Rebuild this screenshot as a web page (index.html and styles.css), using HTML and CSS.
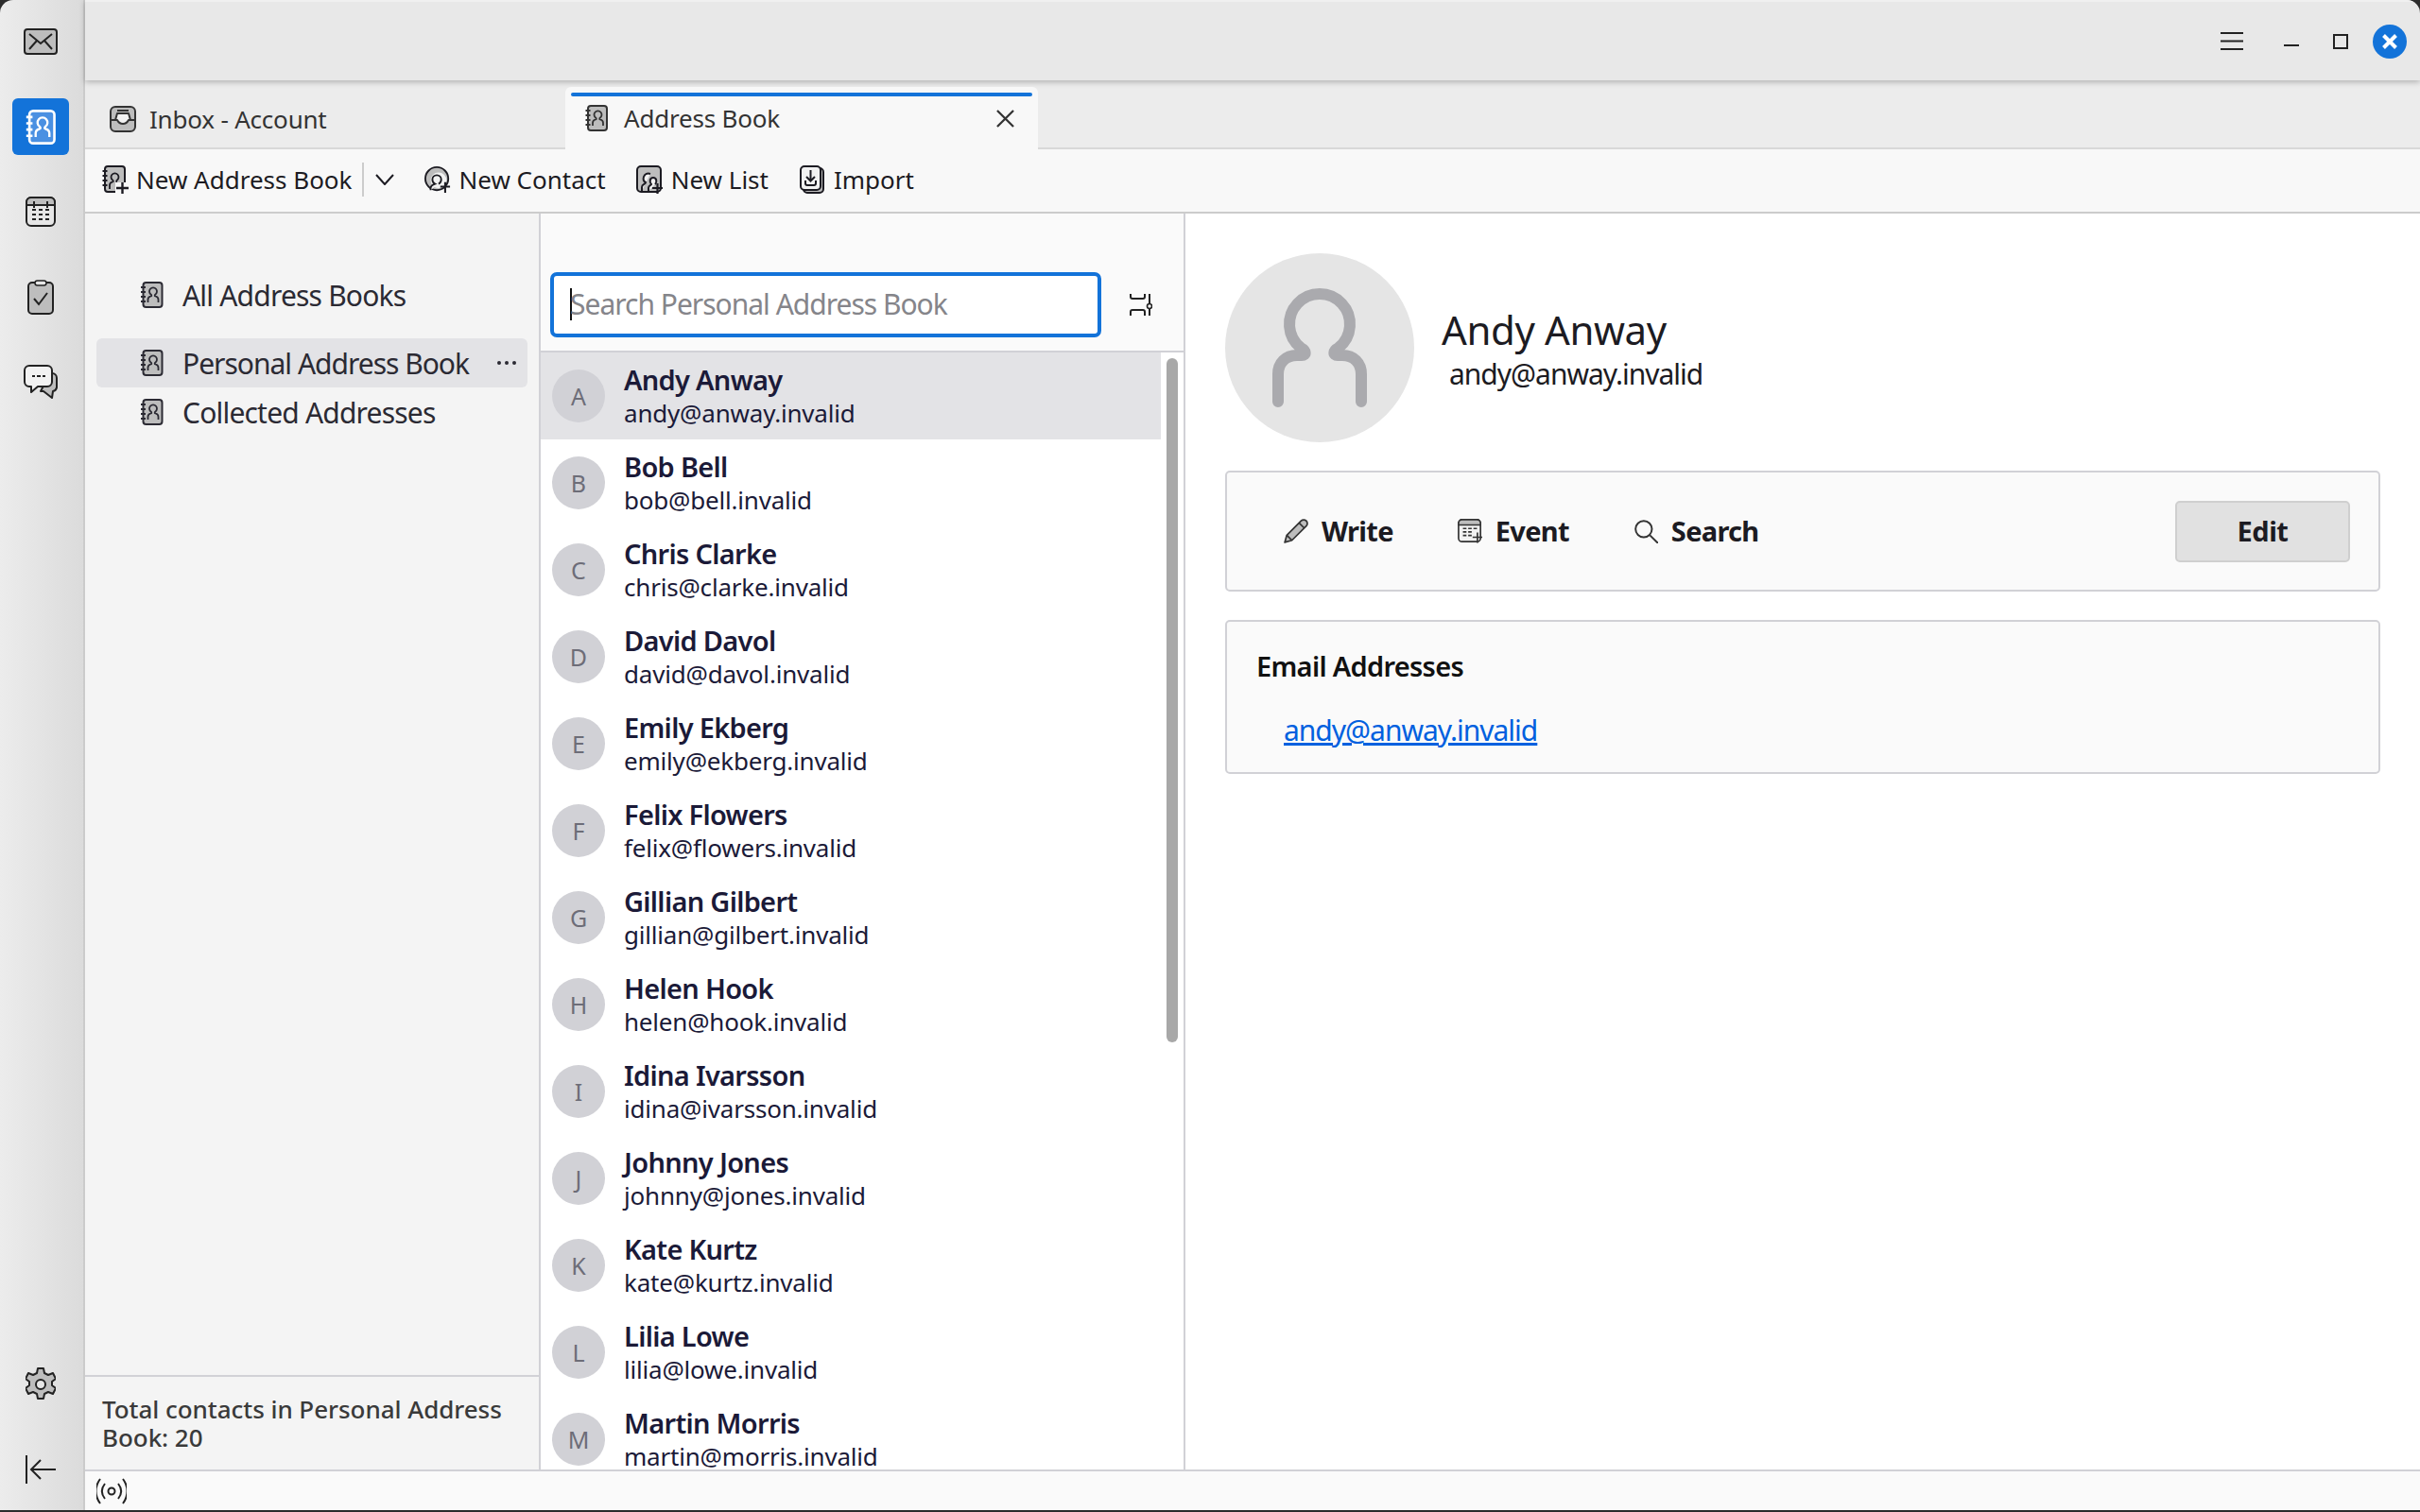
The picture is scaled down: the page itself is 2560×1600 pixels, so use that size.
FILE: index.html
```html
<!DOCTYPE html>
<html lang="en">

<head>
    <meta charset="UTF-8" />
    <title>Address Book</title>
    <link rel="stylesheet" href="styles.css">
</head>

<body>
    <svg class="defs" width="0" height="0">
        <symbol id="abook" viewBox="0 0 24 28">
            <rect class="ic-body" x="3" y="1" width="20" height="26" rx="3" stroke="currentColor" stroke-width="2" />
            <path d="M0.5 6h5M0.5 11h5M0.5 16h5M0.5 21h5" stroke="currentColor" stroke-width="2" fill="none" />
            <path d="M8 22v-3c0-2 1-3 3-3.500c1-.3 1-1 .3-1.800a4 4 0 1 1 4.400 0c-.7.800-.7 1.500.3 1.800c2 .5 3 1.500 3 3.500v3" stroke="currentColor" stroke-width="1.800" fill="none" />
        </symbol>
        <symbol id="abook-new" viewBox="0 0 28 30">
            <rect x="3" y="1" width="21" height="27" rx="3" fill="#bdbdbd" stroke="currentColor" stroke-width="2" />
            <path d="M0.500 6h5M0.500 11h5M0.500 16h5M0.500 21h5" stroke="currentColor" stroke-width="2" fill="none" />
            <path d="M8 25v-4c0-2 1-3 3-3.500c1-.3 1-1 .3-1.800a4 4 0 1 1 4.400 0c-.7.800-.7 1.500.3 1.800" stroke="currentColor" stroke-width="1.800" fill="none" />
            <rect x="14" y="18" width="14" height="12" fill="#f8f8f8" />
            <path d="M15 24h13M21.500 18v12" stroke="currentColor" stroke-width="2.400" />
        </symbol>
    </svg>

    <div class="app">
        <nav class="spaces">
            <button class="space">
                <svg class="mail-ic" viewBox="0 0 36 28"><rect x="1" y="1" width="34" height="26" rx="3" fill="#bdbdbd" stroke="currentColor" stroke-width="2" /><path d="M6 6l12 10L30 6M6 22l8-9M30 22l-8-9" stroke="currentColor" stroke-width="2" fill="none" /></svg>
            </button>
            <button class="space active">
                <svg class="book-big"><use href="#abook" /></svg>
            </button>
            <button class="space">
                <svg class="cal-ic" viewBox="0 0 32 32"><rect x="1" y="1" width="30" height="30" rx="5" fill="#e6e6e6" stroke="currentColor" stroke-width="2" /><path d="M1 9V6a5 5 0 0 1 5-5h20a5 5 0 0 1 5 5v3z" fill="#bdbdbd" stroke="currentColor" stroke-width="2" /><path d="M9 5v7M23 5v7M7 14h4M14 14h4M21 14h4M7 19h4M14 19h4M21 19h4M7 24h4M14 24h4M21 24h4" stroke="currentColor" stroke-width="2" /></svg>
            </button>
            <button class="space">
                <svg class="task-ic" viewBox="0 0 28 37"><rect x="1" y="3" width="26" height="33" rx="4" fill="#bdbdbd" stroke="currentColor" stroke-width="2" /><rect x="8" y="1" width="12" height="5" rx="2.500" fill="#e6e6e6" stroke="currentColor" stroke-width="1.500" /><path d="M7 20l5 6l9-12" stroke="currentColor" stroke-width="2" fill="none" /></svg>
            </button>
            <button class="space">
                <svg class="chat-ic" viewBox="0 0 36 36"><path d="M28 9h2a5 5 0 0 1 5 5v10a5 5 0 0 1-4 4l-1 7l-9-7h-3z" fill="#bdbdbd" stroke="currentColor" stroke-width="2" stroke-linejoin="round" /><path d="M6 1h19a5 5 0 0 1 5 5v12a5 5 0 0 1-5 5H15l-7 6v-6H6a5 5 0 0 1-5-5V6a5 5 0 0 1 5-5z" fill="#f2f2f2" stroke="currentColor" stroke-width="2" stroke-linejoin="round" /><path d="M9 12h3M14 12h4M20 12h3" stroke="currentColor" stroke-width="2" /></svg>
            </button>
            <button class="space push">
                <svg class="gear-ic" viewBox="0 0 32 36"><path d="M13 1h6l1 5l4 2l5-2l3 6l-4 3v4l4 3l-3 6l-5-2l-4 2l-1 5h-6l-1-5l-4-2l-5 2l-3-6l4-3v-4l-4-3l3-6l5 2l4-2z" fill="#bdbdbd" stroke="currentColor" stroke-width="2" stroke-linejoin="round" /><circle cx="16" cy="18" r="5" fill="#e6e6e6" stroke="currentColor" stroke-width="2" /></svg>
            </button>
            <button class="space">
                <svg class="collapse-ic" viewBox="0 0 32 30"><path d="M1 0v30M32 15H7M16 5L6 15l10 10" stroke="currentColor" stroke-width="2" fill="none" /></svg>
            </button>
        </nav>

        <div class="main">
            <header class="titlebar">
                <svg class="menu-ic" viewBox="0 0 24 19"><path d="M0 1h24M0 9.500h24M0 18h24" stroke="currentColor" stroke-width="2" /></svg>
                <span class="win-min"></span>
                <span class="win-max"></span>
                <span class="win-close">
                    <svg viewBox="0 0 36 36"><path d="M11.500 11.500l13 13M24.500 11.500l-13 13" stroke="#fff" stroke-width="4" /></svg>
                </span>
            </header>

            <div class="tabs">
                <div class="tab">
                    <svg class="tab-ic" viewBox="0 0 28 28"><rect x="1" y="1" width="26" height="26" rx="5" fill="#bdbdbd" stroke="currentColor" stroke-width="2" /><path d="M6 15l2-7h12l2 7h-2c-1 2-3 4-6 4s-5-2-6-4z" fill="#f2f2f2" stroke="currentColor" stroke-width="2" stroke-linejoin="round" /><path d="M1 15h6M21 15h6M8 5h12" stroke="currentColor" stroke-width="2" /></svg>
                    <span>Inbox - Account</span>
                </div>
                <div class="tab current">
                    <svg class="tab-ic book-tab"><use href="#abook" /></svg>
                    <span>Address Book</span>
                    <svg class="tab-close" viewBox="0 0 20 20"><path d="M1 1l18 18M19 1L1 19" stroke="currentColor" stroke-width="2.400" /></svg>
                </div>
            </div>

            <div class="toolbar">
                <button class="tool first">
                    <svg class="tool-ic"><use href="#abook-new" /></svg>
                    <span>New Address Book</span>
                </button>
                <span class="tool-sep"></span>
                <svg class="chevron" viewBox="0 0 20 12"><path d="M1 1l9 10l9-10" stroke="currentColor" stroke-width="2" fill="none" /></svg>
                <button class="tool">
                    <svg class="tool-ic" viewBox="0 0 30 30"><circle cx="14" cy="14" r="13" fill="#bdbdbd" stroke="currentColor" stroke-width="2" /><circle cx="16" cy="16" r="9" fill="#f2f2f2" /><path d="M7 27v-2c0-3 2-4 5-5c-2-1-3-3-3-5a5 5 0 0 1 10 0c0 2-1 4-3 5" fill="#f2f2f2" stroke="currentColor" stroke-width="2" /><path d="M18 23h11M23.500 18v12" stroke="currentColor" stroke-width="2.200" /></svg>
                    <span>New Contact</span>
                </button>
                <button class="tool">
                    <svg class="tool-ic" viewBox="0 0 28 30"><rect x="1" y="1" width="25" height="27" rx="4" fill="#bdbdbd" stroke="currentColor" stroke-width="2" /><path d="M6 27v-4c0-3 4-3 4-5c-2-1-3-3-2-6s4-4 7-3M13 27v-3c0-3 3-3 3-4c-2-2-2-7 2-7s4 5 2 7" fill="#f2f2f2" stroke="currentColor" stroke-width="2" /><path d="M17 24h11M22.500 19v11" stroke="currentColor" stroke-width="2.200" /></svg>
                    <span>New List</span>
                </button>
                <button class="tool">
                    <svg class="tool-ic" viewBox="0 0 26 30"><rect x="4" y="3" width="21" height="26" rx="4" fill="#bdbdbd" stroke="currentColor" stroke-width="2" /><rect x="1" y="1" width="21" height="25" rx="4" fill="#f2f2f2" stroke="currentColor" stroke-width="2" /><path d="M11.500 5v11M7 12l4.500 4.500L16 12M6 16v3a2 2 0 0 0 2 2h7a2 2 0 0 0 2-2v-3" stroke="currentColor" stroke-width="2" fill="none" /></svg>
                    <span>Import</span>
                </button>
            </div>

            <div class="panes">
                <aside class="books">
                    <ul class="book-list">
                        <li class="book all"><svg class="book-ic"><use href="#abook" /></svg><span>All Address Books</span></li>
                        <li class="book selected"><svg class="book-ic"><use href="#abook" /></svg><span>Personal Address Book</span>
                            <svg class="more" viewBox="0 0 20 4"><circle cx="2" cy="2" r="2" /><circle cx="10" cy="2" r="2" /><circle cx="18" cy="2" r="2" /></svg>
                        </li>
                        <li class="book"><svg class="book-ic"><use href="#abook" /></svg><span>Collected Addresses</span></li>
                    </ul>
                    <div class="total">Total contacts in Personal Address Book: 20</div>
                </aside>

                <section class="contacts">
                    <div class="search-row">
                        <div class="search-box"><i class="caret"></i><span>Search Personal Address Book</span></div>
                        <svg class="filter-ic" viewBox="0 0 24 23"><path d="M1 0v3c0 1 1 2 2 2h11c1 0 2-1 2-2V0M1 23v-4c0-1 1-2 2-2h11c1 0 2 1 2 2v4M21 0v10M21 16v7" stroke="currentColor" stroke-width="2" fill="none" /><circle cx="21" cy="13" r="2.500" fill="none" stroke="currentColor" stroke-width="1.600" /></svg>
                    </div>
                    <div class="rows">
                        <div class="row selected"><span class="letter">A</span><div><div class="name">Andy Anway</div><div class="mail">andy@anway.invalid</div></div></div>
                        <div class="row"><span class="letter">B</span><div><div class="name">Bob Bell</div><div class="mail">bob@bell.invalid</div></div></div>
                        <div class="row"><span class="letter">C</span><div><div class="name">Chris Clarke</div><div class="mail">chris@clarke.invalid</div></div></div>
                        <div class="row"><span class="letter">D</span><div><div class="name">David Davol</div><div class="mail">david@davol.invalid</div></div></div>
                        <div class="row"><span class="letter">E</span><div><div class="name">Emily Ekberg</div><div class="mail">emily@ekberg.invalid</div></div></div>
                        <div class="row"><span class="letter">F</span><div><div class="name">Felix Flowers</div><div class="mail">felix@flowers.invalid</div></div></div>
                        <div class="row"><span class="letter">G</span><div><div class="name">Gillian Gilbert</div><div class="mail">gillian@gilbert.invalid</div></div></div>
                        <div class="row"><span class="letter">H</span><div><div class="name">Helen Hook</div><div class="mail">helen@hook.invalid</div></div></div>
                        <div class="row"><span class="letter">I</span><div><div class="name">Idina Ivarsson</div><div class="mail">idina@ivarsson.invalid</div></div></div>
                        <div class="row"><span class="letter">J</span><div><div class="name">Johnny Jones</div><div class="mail">johnny@jones.invalid</div></div></div>
                        <div class="row"><span class="letter">K</span><div><div class="name">Kate Kurtz</div><div class="mail">kate@kurtz.invalid</div></div></div>
                        <div class="row"><span class="letter">L</span><div><div class="name">Lilia Lowe</div><div class="mail">lilia@lowe.invalid</div></div></div>
                        <div class="row"><span class="letter">M</span><div><div class="name">Martin Morris</div><div class="mail">martin@morris.invalid</div></div></div>
                        <span class="thumb"></span>
                    </div>
                </section>

                <section class="detail">
                    <div class="head">
                        <div class="photo">
                            <svg viewBox="0 0 200 200"><path d="M56 157V128c0-12 8-20 20-20h5c5 0 5-5-1-8a32 32 0 1 1 40 0c-6 3-6 8-1 8h5c12 0 20 8 20 20V157" fill="none" stroke="#aaaaae" stroke-width="12" stroke-linecap="round" /></svg>
                        </div>
                        <div class="head-text">
                            <div class="big-name">Andy Anway</div>
                            <div class="big-mail">andy@anway.invalid</div>
                        </div>
                    </div>

                    <div class="card actions">
                        <button class="action">
                            <svg viewBox="0 0 24 24"><path d="M1 23l2-7L17 2a3 3 0 0 1 5 5L8 21z" fill="#bdbdbd" stroke="#333" stroke-width="1.600" stroke-linejoin="round" /><path d="M15 4l5 5M3 16l5 5" stroke="#333" stroke-width="1.600" /></svg>
                            <span>Write</span>
                        </button>
                        <button class="action">
                            <svg viewBox="0 0 28 28"><rect x="1" y="1" width="25" height="25" rx="4" fill="#f2f2f2" stroke="#333" stroke-width="1.800" /><path d="M1 7V5a4 4 0 0 1 4-4h17a4 4 0 0 1 4 4v2z" fill="#bdbdbd" stroke="#333" stroke-width="1.800" /><path d="M6 11h4M12 11h4M18 11h4M6 15h4M12 15h4M6 19h4M12 19h4" stroke="#333" stroke-width="1.800" /><path d="M17 21h11M22.500 15.500v12" stroke="#333" stroke-width="1.800" /></svg>
                            <span>Event</span>
                        </button>
                        <button class="action">
                            <svg viewBox="0 0 24 24"><circle cx="10" cy="10" r="8" fill="none" stroke="#333" stroke-width="1.800" /><path d="M16 16l8 8" stroke="#333" stroke-width="1.800" /></svg>
                            <span>Search</span>
                        </button>
                        <button class="edit">Edit</button>
                    </div>

                    <div class="card emails">
                        <h2>Email Addresses</h2>
                        <a href="#">andy@anway.invalid</a>
                    </div>
                </section>
            </div>

            <footer class="status">
                <svg viewBox="0 0 32 28"><circle cx="16" cy="14" r="3.500" fill="none" stroke="currentColor" stroke-width="2" /><path d="M9 6c-4 5-4 11 0 16M23 6c4 5 4 11 0 16M4 1c-6 8-6 18 0 26M28 1c6 8 6 18 0 26" fill="none" stroke="currentColor" stroke-width="2" /></svg>
            </footer>
        </div>
    </div>
</body>

</html>
```

FILE: styles.css
```css
* {
    box-sizing: border-box;
}

html,
body {
    margin: 0;
    height: 1600px;
    overflow: hidden;
    background: #2c2c2c;
}

body {
    font-family: "Noto Sans", "Open Sans", sans-serif;
    color: #1c1b22;
}

button {
    font: inherit;
    color: inherit;
    background: none;
    border: none;
    padding: 0;
}

.defs {
    display: block;
    height: 0;
}

.ic-body {
    fill: var(--ic-fill, #bdbdbd);
}

.app {
    height: 1598px;
    display: flex;
    border-radius: 14px 14px 0 0;
    overflow: hidden;
}

/* left strip */
.spaces {
    width: 90px;
    flex: none;
    display: flex;
    flex-direction: column;
    align-items: center;
    gap: 30px;
    padding: 14px 2px 13px 0;
    background: linear-gradient(to right, #ececec, #dbdbdb);
    border-right: 2px solid #cbcbcb;
    color: #222;
}

.space {
    width: 60px;
    height: 60px;
    display: flex;
    align-items: center;
    justify-content: center;
    border-radius: 6px;
}

.space.active {
    background: #1373d9;
    color: #fff;
    --ic-fill: #4a90e2;
}

.space.push {
    margin-top: auto;
}

.mail-ic { width: 36px; height: 28px; }
.book-big { width: 32px; height: 37px; }
.cal-ic { width: 32px; height: 32px; }
.task-ic { width: 28px; height: 37px; }
.chat-ic { width: 36px; height: 36px; }
.gear-ic { width: 32px; height: 36px; }
.collapse-ic { width: 32px; height: 30px; }

.main {
    flex: 1;
    min-width: 0;
    display: flex;
    flex-direction: column;
}

.titlebar {
    height: 85px;
    flex: none;
    display: flex;
    align-items: center;
    padding-right: 14px;
    background: #e8e8e8;
    border-top: 2px solid #f0f0f0;
    box-shadow: 0 2px 6px rgb(0 0 0 / 0.25);
    position: relative;
    color: #222;
}

.menu-ic {
    width: 24px;
    height: 19px;
    margin-left: auto;
}

.win-min {
    width: 16px;
    height: 2px;
    margin: 8px 0 0 43px;
    background: #222;
}

.win-max {
    width: 16px;
    height: 16px;
    margin-left: 36px;
    border: 2px solid #222;
}

.win-close {
    width: 36px;
    height: 36px;
    margin-left: 26px;
    border-radius: 50%;
    background: #1373d9;
}

.win-close svg {
    display: block;
}

.tabs {
    height: 73px;
    flex: none;
    display: flex;
    background: #ececec;
    border-bottom: 2px solid #d8d8d8;
    font-size: 26px;
    letter-spacing: -0.2px;
    color: #333;
}

.tab {
    width: 508px;
    display: flex;
    align-items: center;
    padding: 10px 0 0 26px;
    gap: 14px;
}

.tab-ic {
    width: 28px;
    height: 28px;
    flex: none;
}

.tab.current {
    width: 500px;
    height: 66px;
    margin-top: 7px;
    padding: 0 25px 0 20px;
    gap: 16px;
    background: #f8f8f8;
    border-radius: 6px 6px 0 0;
    position: relative;
}

.tab.current::before {
    content: "";
    position: absolute;
    top: 6px;
    left: 6px;
    right: 6px;
    height: 4px;
    border-radius: 2px;
    background: #1373d9;
}

.book-tab {
    width: 26px;
}

.tab-close {
    width: 19px;
    height: 19px;
    margin-left: auto;
}

.toolbar {
    height: 68px;
    flex: none;
    display: flex;
    align-items: center;
    padding: 0 0 2px 18px;
    background: #f8f8f8;
    border-bottom: 2px solid #cccccc;
    font-size: 26px;
    letter-spacing: -0.5px;
}

.tool {
    display: flex;
    align-items: center;
    gap: 9px;
    margin-right: 32px;
}

.tool.first {
    gap: 8px;
    margin-right: 10px;
}

.tool-ic {
    width: 28px;
    height: 30px;
}

.tool-sep {
    width: 2px;
    height: 36px;
    background: #cccccc;
}

.chevron {
    width: 20px;
    height: 12px;
    margin: 0 32px 0 12px;
}

.panes {
    flex: 1;
    min-height: 0;
    display: flex;
}

/* address books */
.books {
    width: 482px;
    flex: none;
    display: flex;
    flex-direction: column;
    background: #f4f4f4;
    border-right: 2px solid #d1d1d6;
}

.book-list {
    flex: 1;
    list-style: none;
    margin: 0;
    padding: 60px 12px 0;
}

.book {
    height: 52px;
    display: flex;
    align-items: center;
    gap: 20px;
    padding: 0 12px 0 46px;
    border-radius: 6px;
    font-size: 30px;
    letter-spacing: -0.8px;
    color: #2b2a33;
}

.book.all {
    margin-bottom: 20px;
}

.book.selected {
    background: #e3e3e6;
    letter-spacing: -1px;
}

.book-ic {
    width: 25px;
    height: 28px;
    flex: none;
}

.more {
    width: 20px;
    height: 4px;
    margin-left: auto;
    fill: #2b2a33;
}

.total {
    height: 100px;
    padding: 19px 18px 0;
    border-top: 2px solid #d1d1d6;
    font-size: 26px;
    line-height: 30px;
    font-weight: 500;
    letter-spacing: -0.05px;
    color: #3a3a3a;
}

/* contact list */
.contacts {
    width: 682px;
    flex: none;
    display: flex;
    flex-direction: column;
    border-right: 2px solid #d1d1d6;
    background: #fff;
}

.search-row {
    height: 147px;
    flex: none;
    display: flex;
    align-items: flex-end;
    padding: 0 0 14px 10px;
    background: #fafafa;
    border-bottom: 2px solid #d1d1d6;
}

.search-box {
    width: 583px;
    height: 69px;
    display: flex;
    align-items: center;
    padding: 0 0 2px 17px;
    background: #fff;
    border: 4px solid #1373d9;
    border-radius: 7px;
    font-size: 30px;
    letter-spacing: -1px;
    color: #85858a;
}

.caret {
    width: 2px;
    height: 34px;
    margin-right: -2px;
    background: #111;
}

.filter-ic {
    width: 24px;
    height: 23px;
    margin: 0 0 23px 30px;
    color: #222;
}

.rows {
    flex: 1;
    min-height: 0;
    overflow: hidden;
    position: relative;
}

.row {
    height: 92px;
    width: 656px;
    display: flex;
    align-items: center;
    gap: 20px;
    padding-left: 12px;
}

.row.selected {
    background: #e3e3e6;
}

.letter {
    width: 56px;
    height: 56px;
    flex: none;
    display: flex;
    align-items: center;
    justify-content: center;
    border-radius: 50%;
    background: #d1d1d6;
    font-size: 25px;
    color: #6d6d78;
}

.name {
    font-size: 29px;
    line-height: 36px;
    font-weight: 600;
    letter-spacing: -0.7px;
    color: #1b1a38;
}

.mail {
    font-size: 26px;
    line-height: 34px;
    letter-spacing: -0.2px;
    color: #1b1a38;
}

.thumb {
    position: absolute;
    top: 6px;
    right: 6px;
    width: 12px;
    height: 724px;
    border-radius: 6px;
    background: #a8a8a8;
}

/* contact card */
.detail {
    flex: 1;
    min-width: 0;
    padding: 42px 42px 0;
    background: #fff;
}

.head {
    display: flex;
    align-items: center;
    gap: 29px;
    margin-bottom: 30px;
}

.photo {
    width: 200px;
    height: 200px;
    flex: none;
    border-radius: 50%;
    background: #e5e5e5;
}

.photo svg {
    display: block;
}

.head-text {
    padding-top: 4px;
}

.big-name {
    font-size: 42px;
    line-height: 52px;
    letter-spacing: -0.4px;
}

.big-mail {
    font-size: 30px;
    line-height: 42px;
    letter-spacing: -1px;
    margin-left: 8px;
}

.card {
    background: #fafafa;
    border: 2px solid #d1d1d6;
    border-radius: 5px;
}

.actions {
    height: 128px;
    display: flex;
    align-items: center;
    padding: 0 30px 0 60px;
    margin-bottom: 30px;
}

.action {
    display: flex;
    align-items: center;
    gap: 14px;
    margin-right: 68px;
    font-size: 29px;
    font-weight: 700;
    letter-spacing: -0.7px;
}

.action span {
    padding-bottom: 2px;
}

.action svg {
    width: 26px;
    height: 26px;
}

.edit {
    width: 185px;
    height: 65px;
    margin-left: auto;
    padding-bottom: 2px;
    background: #e1e1e1;
    border: 2px solid #cfcfcf;
    border-radius: 5px;
    font-size: 29px;
    font-weight: 700;
    letter-spacing: -0.5px;
}

.emails {
    height: 163px;
    padding: 28px 31px;
}

.emails h2 {
    margin: 0 0 28px;
    font-size: 29px;
    line-height: 38px;
    font-weight: 600;
    letter-spacing: -0.7px;
    color: #111;
}

.emails a {
    margin-left: 29px;
    font-size: 30px;
    letter-spacing: -1px;
    color: #0060df;
}

.status {
    height: 43px;
    flex: none;
    display: flex;
    align-items: center;
    padding-left: 12px;
    background: #fafafa;
    border-top: 2px solid #d1d1d6;
    color: #222;
}

.status svg {
    width: 32px;
    height: 28px;
}
```
